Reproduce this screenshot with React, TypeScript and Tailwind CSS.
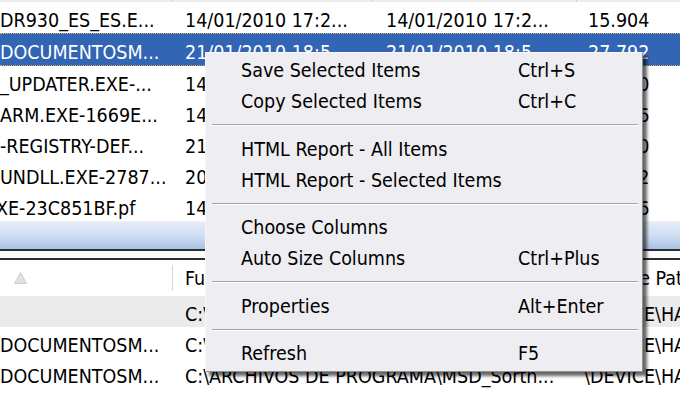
import React from 'react';

interface TopRow {
  name: string;
  nameClass?: string;
  created: string;
  modified: string;
  size: string;
  selected?: boolean;
}

const topRows: TopRow[] = [
  { name: 'DR930_ES_ES.E...', created: '14/01/2010 17:2...', modified: '14/01/2010 17:2...', size: '15.904' },
  { name: 'DOCUMENTOSM...', created: '21/01/2010 18:5...', modified: '21/01/2010 18:5...', size: '27.792', selected: true },
  { name: '_UPDATER.EXE-...', created: '14/01/2010 17:1...', modified: '14/01/2010 17:1...', size: '12.540' },
  { name: 'ARM.EXE-1669E...', created: '14/01/2010 17:3...', modified: '14/01/2010 17:3...', size: '38.916' },
  { name: '-REGISTRY-DEF...', created: '21/01/2010 18:4...', modified: '21/01/2010 18:4...', size: '27.880' },
  { name: 'UNDLL.EXE-2787...', created: '20/01/2010 11:0...', modified: '20/01/2010 11:0...', size: '19.632' },
  { name: 'XE-23C851BF.pf', nameClass: '-ml-[4px]', created: '14/01/2010 17:2...', modified: '14/01/2010 17:2...', size: '25.736' },
];

const bottomRows = [
  { name: '', path: 'C:\\DOCUMENTS AND SETTINGS\\ADMIN\\...', device: '\\DEVICE\\HARDDISKVOLUME1\\...', gray: true },
  { name: 'DOCUMENTOSM...', path: 'C:\\DOCUMENTS AND SETTINGS\\ADMIN\\...', device: '\\DEVICE\\HARDDISKVOLUME1\\...' },
  { name: 'DOCUMENTOSM...', path: 'C:\\ARCHIVOS DE PROGRAMA\\MSD_Sortn...', device: '\\DEVICE\\HARDDISKVOLUME1\\...' },
];

type MenuEntry = { label: string; shortcut?: string } | 'sep';

const menu: MenuEntry[] = [
  { label: 'Save Selected Items', shortcut: 'Ctrl+S' },
  { label: 'Copy Selected Items', shortcut: 'Ctrl+C' },
  'sep',
  { label: 'HTML Report - All Items' },
  { label: 'HTML Report - Selected Items' },
  'sep',
  { label: 'Choose Columns' },
  { label: 'Auto Size Columns', shortcut: 'Ctrl+Plus' },
  'sep',
  { label: 'Properties', shortcut: 'Alt+Enter' },
  'sep',
  { label: 'Refresh', shortcut: 'F5' },
];

const cell = 'h-[31px] box-border pt-[7px] leading-[24px] whitespace-nowrap overflow-hidden';

export default function App() {
  return (
    <div className="relative w-[680px] h-[396px] overflow-hidden bg-white text-black text-[19.5px] font-['DejaVu_Sans_Condensed','DejaVu_Sans',sans-serif]">
      {/* Top list header edge */}
      <div className="flex h-[2px] bg-[#ececec]">
        <div className="w-[172px] border-r border-[#cfcfcf]" />
        <div className="w-[201px] border-r border-[#cfcfcf]" />
        <div className="w-[204px] border-r border-[#cfcfcf]" />
      </div>

      {/* Top list rows */}
      {topRows.map((r, i) => (
        <div
          key={i}
          className={
            r.selected
              ? 'flex bg-[#3265b4] text-white border-y border-dotted border-[#d8b060]'
              : 'flex'
          }
        >
          <div className={`w-[172px] ${cell} ${r.selected ? 'pt-[6px]' : ''}`}>
            <span className={`block ${r.nameClass ?? ''}`}>{r.name}</span>
          </div>
          <div className={`w-[201px] pl-[13px] ${cell} ${r.selected ? 'pt-[6px]' : ''}`}>{r.created}</div>
          <div className={`w-[204px] pl-[13px] ${cell} ${r.selected ? 'pt-[6px]' : ''}`}>{r.modified}</div>
          <div className={`flex-1 pl-[11px] ${cell} ${r.selected ? 'pt-[6px]' : ''}`}>{r.size}</div>
        </div>
      ))}

      {/* Horizontal scroll bar */}
      <div className="h-[28px] border-t border-[#eef2f8] bg-gradient-to-b from-[#e4ecf8] via-[#d0def2] to-[#a9c1e4]" />
      {/* Splitter */}
      <div className="h-[2px] bg-[#2c2c2c]" />
      <div className="h-[7px] bg-[#fbfbfb]" />
      <div className="h-[2px] bg-[#2c2c2c]" />

      {/* Bottom list header */}
      <div className="flex h-[36px] bg-white">
        <div className="w-[172px] flex items-center pl-[14px]">
          <svg width="13" height="12" viewBox="0 0 13 12">
            <polygon points="6.5,0.5 12.5,11.5 0.5,11.5" fill="#e2e2e2" stroke="#cdcdcd" strokeWidth="1" />
          </svg>
        </div>
        <div className="w-px h-[26px] self-center bg-[#d6d6d6]" />
        <div className={`w-[404px] pl-[12px] ${cell} pt-[6px]`}>Full Path</div>
        <div className={`flex-1 pl-[13px] ${cell} pt-[6px]`}>Device Path</div>
      </div>

      {/* Bottom list rows */}
      {bottomRows.map((r, i) => (
        <div key={i} className={r.gray ? 'flex bg-[#ebebeb]' : 'flex'}>
          <div className={`w-[173px] ${cell}`}>{r.name}</div>
          <div className={`w-[404px] pl-[12px] ${cell}`}>{r.path}</div>
          <div className={`flex-1 pl-[7px] ${cell}`}>{r.device}</div>
        </div>
      ))}

      {/* Context menu */}
      <div className="absolute left-[205px] top-[52px] w-[438px] box-border bg-[#eeedf2] border border-t-[#f7f7f9] border-l-[#f7f7f9] border-r-[#8f8f94] border-b-[#8f8f94] pt-[2px] pb-[2px] shadow-[4px_4px_3px_rgba(0,0,0,0.6)]">
        {menu.map((m, i) =>
          m === 'sep' ? (
            <div key={i} className="h-[16.5px] flex items-center pl-[6px] pr-[4px]">
              <div className="w-full border-t border-b border-t-[#a4a3a9] border-b-white" />
            </div>
          ) : (
            <div key={i} className="flex h-[31px] leading-[31px] pl-[35px] whitespace-nowrap">
              <span className="w-[277px]">{m.label}</span>
              <span>{m.shortcut}</span>
            </div>
          )
        )}
      </div>
    </div>
  );
}
